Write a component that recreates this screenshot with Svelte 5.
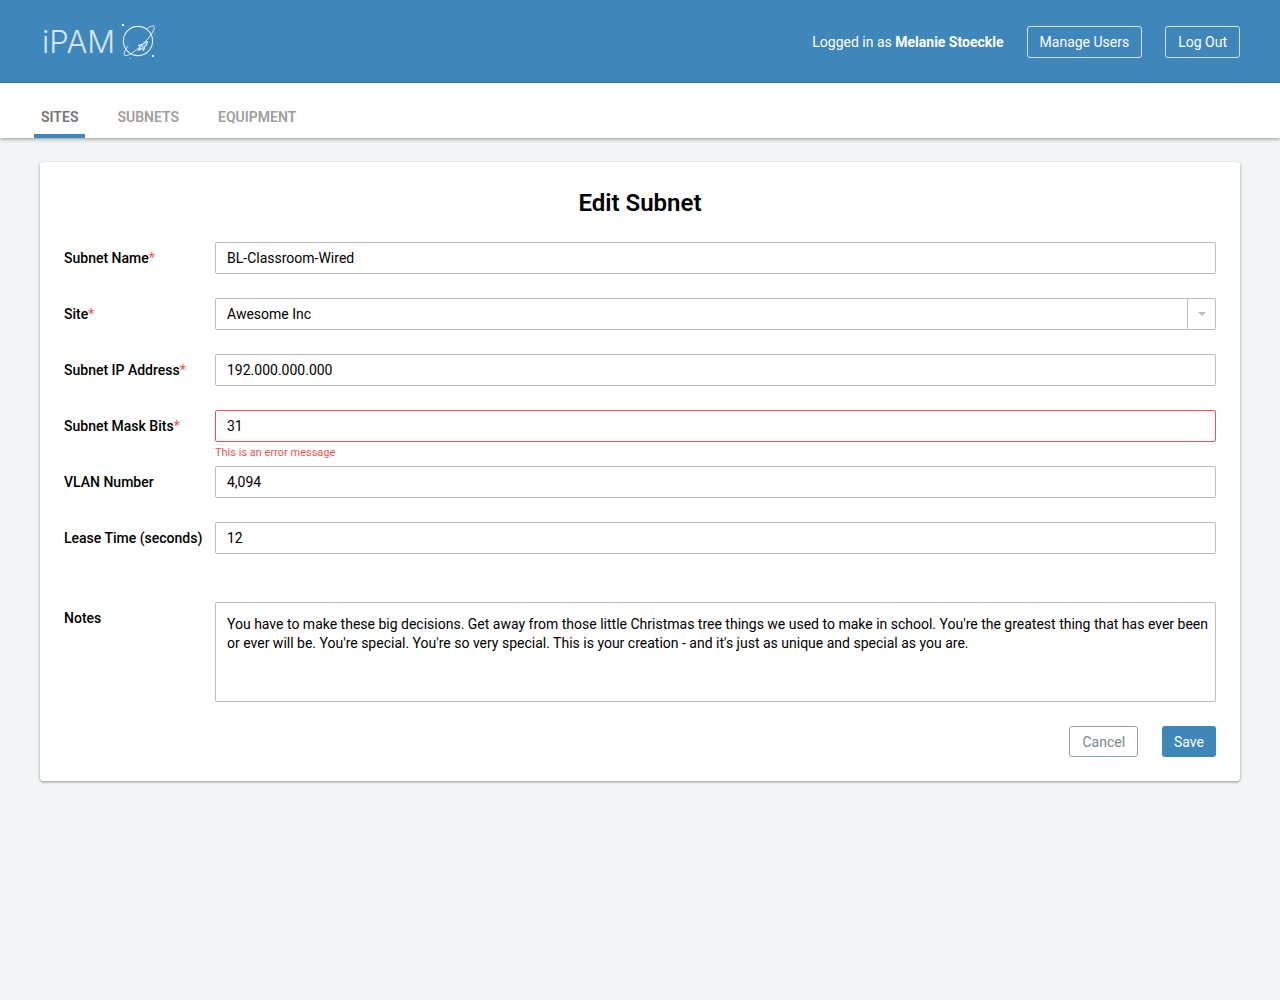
<script>
  let subnetName = $state('BL-Classroom-Wired');
  let site = $state('Awesome Inc');
  let ip = $state('192.000.000.000');
  let mask = $state('31');
  let vlan = $state('4,094');
  let lease = $state('12');
  let notes = $state(
    "You have to make these big decisions. Get away from those little Christmas tree things we used to make in school. You're the greatest thing that has ever been or ever will be. You're special. You're so very special. This is your creation - and it's just as unique and special as you are."
  );
</script>

<header>
  <a class="logo" href="#home" aria-label="iPAM home">
    <span>iPAM</span>
    <svg viewBox="0 0 36 38" fill="none" stroke="#fff" aria-hidden="true">
      <circle cx="18" cy="18" r="14.6" stroke-width="1.1" opacity=".85" />
      <path d="M26.5 6.2C30 3.3 33 2.2 34 3.4c1.7 2.1-3.6 10.3-11 17.6S7.3 34.2 4.600 32.4c-1.5-1 .1-5 3.6-9.6" stroke-width="1" opacity=".8" />
      <path d="M27.5 18.5c-2.7.4-4.8 2.1-6.200 4.4l2.2 2.1c2.2-1.5 3.7-3.7 4-6.500z" fill="#fff" fill-opacity=".3" stroke-width="1" />
      <path d="M22 21.500l-3.600.8 2.300 1.200M24.500 24.400l-.9 3.400-1.300-2.300M20.600 23.600l-2.400 3.900 4.200-2.100M19 25l2 1.500" stroke-width="1" />
      <g fill="#fff" stroke="none">
        <rect x="2" y="1" width="2" height="2" />
        <rect x="32" y="32" width="2" height="2" />
        <rect x="34" y="10" width="1" height="1" opacity=".4" />
        <rect x="9" y="35" width="2" height="1" opacity=".4" />
      </g>
    </svg>
  </a>
  <div class="account">
    <p>Logged in as <strong>Melanie Stoeckle</strong></p>
    <button class="outline" type="button">Manage Users</button>
    <button class="outline" type="button">Log Out</button>
  </div>
</header>

<nav>
  <a class="active" href="#sites" aria-current="page">SITES</a>
  <a href="#subnets">SUBNETS</a>
  <a href="#equipment">EQUIPMENT</a>
</nav>

<main>
  <form onsubmit={(e) => e.preventDefault()}>
    <h1>Edit Subnet</h1>

    <div class="row">
      <label for="name">Subnet Name<span class="req">*</span></label>
      <input id="name" type="text" bind:value={subnetName} />
    </div>
    <div class="row">
      <label for="site">Site<span class="req">*</span></label>
      <div class="select">
        <select id="site" bind:value={site}>
          <option>Awesome Inc</option>
        </select>
        <span class="arrow"></span>
      </div>
    </div>
    <div class="row">
      <label for="ip">Subnet IP Address<span class="req">*</span></label>
      <input id="ip" type="text" bind:value={ip} />
    </div>
    <div class="row invalid">
      <label for="mask">Subnet Mask Bits<span class="req">*</span></label>
      <input id="mask" type="text" bind:value={mask} aria-invalid="true" aria-describedby="mask-error" />
      <p class="error" id="mask-error">This is an error message</p>
    </div>
    <div class="row">
      <label for="vlan">VLAN Number</label>
      <input id="vlan" type="text" bind:value={vlan} />
    </div>
    <div class="row">
      <label for="lease">Lease Time (seconds)</label>
      <input id="lease" type="text" bind:value={lease} />
    </div>
    <div class="row notes">
      <label for="notes">Notes</label>
      <div class="area">
        <textarea id="notes" bind:value={notes}></textarea>
      </div>
    </div>

    <div class="actions">
      <button class="cancel" type="button">Cancel</button>
      <button class="save" type="submit">Save</button>
    </div>
  </form>
</main>

<style>
  :global(body) {
    margin: 0;
    background: #f1f5f6;
    color: #000;
    font: 14px/20px Roboto, sans-serif;
  }
  * {
    box-sizing: border-box;
  }
  p,
  h1 {
    margin: 0;
  }
  button,
  input,
  select,
  textarea {
    font: inherit;
    color: inherit;
  }
  header {
    display: flex;
    align-items: center;
    justify-content: space-between;
    height: 83px;
    padding: 0 40px 0 42px;
    background: #3f86bb;
    color: #fff;
  }
  .logo {
    display: flex;
    align-items: center;
    gap: 5px;
    color: #d5e4ef;
    text-decoration: none;
    font: 300 31px/38px Inter, sans-serif;
  }
  .logo svg {
    width: 36px;
    height: 38px;
  }
  .account {
    display: flex;
    align-items: center;
    gap: 23px;
  }
  button {
    height: 32px;
    padding: 0 12px;
    border: 0;
    border-radius: 3px;
    cursor: pointer;
  }
  .outline {
    border: 1px solid #d5e4ef;
    background: transparent;
  }
  nav {
    position: relative;
    display: flex;
    gap: 25px;
    height: 55px;
    padding-left: 34px;
    background: #fff;
    box-shadow: 0 1px 4px rgba(0, 0, 0, 0.4);
  }
  nav a {
    padding: 24px 7px 0;
    border-bottom: 4px solid transparent;
    color: #9e9e9e;
    font-weight: 600;
    text-decoration: none;
  }
  nav a.active {
    border-color: #3f86bb;
    color: #757575;
  }
  main {
    padding: 24px 40px;
  }
  form {
    padding: 24px;
    border-radius: 3px;
    background: #fff;
    box-shadow: 0 1px 3px rgba(0, 0, 0, 0.4);
  }
  h1 {
    margin-bottom: 22px;
    font-size: 24px;
    line-height: 34px;
    font-weight: 600;
    text-align: center;
  }
  .row {
    display: grid;
    grid-template-columns: 151px 1fr;
    align-items: center;
    margin-bottom: 24px;
  }
  label {
    font-weight: 500;
  }
  .req {
    color: #ef5350;
    font-weight: 400;
  }
  input,
  select {
    width: 100%;
    height: 32px;
    padding: 0 11px;
    border: 1px solid #bdbdbd;
    border-radius: 2px;
    background: #fff;
    appearance: none;
  }
  .select {
    position: relative;
  }
  select {
    display: block;
  }
  .arrow {
    position: absolute;
    top: 0;
    right: 0;
    bottom: 0;
    display: grid;
    place-items: center;
    width: 29px;
    border-left: 1px solid #bdbdbd;
    pointer-events: none;
  }
  .arrow::after {
    content: '';
    border: 4px solid transparent;
    border-top-color: #bdbdbd;
    border-bottom: 0;
  }
  .invalid {
    margin-bottom: 2px;
  }
  .invalid input {
    border-color: #ef5350;
  }
  .error {
    grid-column: 2;
    color: #ef5350;
    font-size: 11px;
    line-height: 22px;
  }
  .notes {
    align-items: start;
    margin-top: 48px;
  }
  .notes label {
    padding-top: 6px;
  }
  .area {
    height: 100px;
    border: 1px solid #bdbdbd;
    border-radius: 2px;
  }
  textarea {
    display: block;
    width: calc(100% + 4px);
    height: 98px;
    padding: 12px 0 0 11px;
    border: 0;
    outline: 0;
    background: transparent;
    line-height: 19px;
    resize: none;
    overflow: hidden;
  }
  .actions {
    display: flex;
    justify-content: flex-end;
    gap: 24px;
  }
  .actions button {
    height: 31px;
  }
  .cancel {
    border: 1px solid #90a4ae;
    background: #fff;
    color: #78858c;
  }
  .save {
    background: #3f86bb;
    color: #fff;
  }
</style>
